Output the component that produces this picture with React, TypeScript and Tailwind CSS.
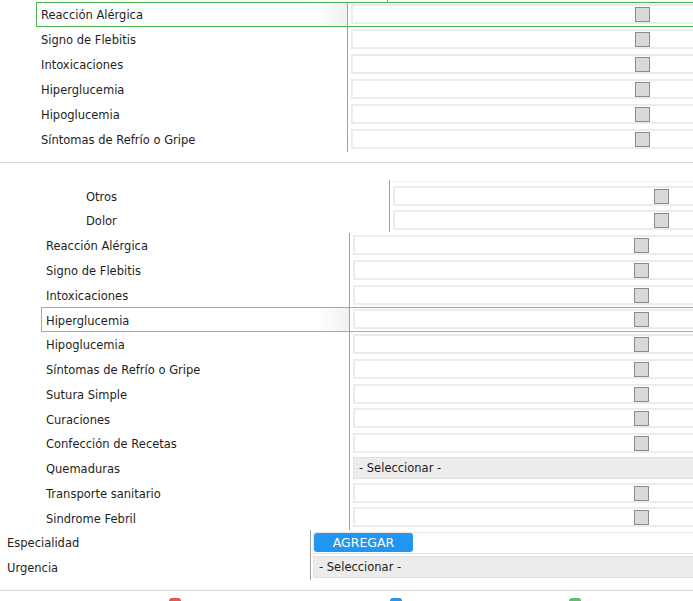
import React from 'react';

const firstGroup = [
  'Reacción Alérgica',
  'Signo de Flebitis',
  'Intoxicaciones',
  'Hiperglucemia',
  'Hipoglucemia',
  'Síntomas de Refrío o Gripe',
];

const otros = ['Otros', 'Dolor'];

const secondGroup = [
  'Reacción Alérgica',
  'Signo de Flebitis',
  'Intoxicaciones',
  'Hiperglucemia',
  'Hipoglucemia',
  'Síntomas de Refrío o Gripe',
  'Sutura Simple',
  'Curaciones',
  'Confección de Recetas',
  'Quemaduras',
  'Transporte sanitario',
  'Sindrome Febril',
];

// focused row: thin green frame, label cell fades to grey on the right
const hlTop =
  'shadow-[inset_0_1px_0_#4cb84c,inset_0_-1px_0_#4cb84c,inset_1px_0_0_#4cb84c]';
const hlSoft =
  'shadow-[inset_0_1px_0_#7ec87e,inset_0_-1px_0_#7ec87e,inset_1px_0_0_#7ec87e]';
const hlLabel = 'bg-[linear-gradient(to_right,#ffffff_90%,#f0f0f0)] my-[1px] ml-[1px]';

function CheckBox() {
  return <div className="w-[15px] h-[15px] mt-[1px] bg-[#d9d9d9] border border-[#8a8a8a] shrink-0" />;
}

function InputBox({ offset }: { offset: string }) {
  return (
    <div className="w-[420px] h-[20px] border-2 border-[#ececec] bg-white flex items-start">
      <div className={offset}>
        <CheckBox />
      </div>
    </div>
  );
}

function SelectBox({ width }: { width: string }) {
  return (
    <div
      className={`${width} h-[22px] bg-[#ececec] border border-[#e2e2e2] flex items-center pl-[5px] pt-[1px] text-[11.5px] text-[#222]`}
    >
      - Seleccionar -
    </div>
  );
}

export default function App() {
  return (
    <div className="w-[693px] h-[601px] overflow-hidden bg-white font-['DejaVu_Sans',sans-serif] text-[11.5px] text-[#1e1e1e]">
      {/* sliver of the block above */}
      <div className="h-[2px] ml-[387px] border-l border-[#a0a0a0]" />

      {/* first group */}
      <div className="flex flex-col">
        {firstGroup.map((label, i) => (
          <div key={label} className={`flex h-[25px] ml-[36px] ${i === 0 ? hlTop : ''}`}>
            <div
              className={`pt-[2px] flex items-center whitespace-nowrap ${i === 0 ? hlLabel + ' w-[310px] pl-[4px]' : 'w-[311px] pl-[5px]'}`}
            >
              {label}
            </div>
            <div className="flex-1 border-l border-[#a0a0a0] pl-[3px] pt-[2px] overflow-hidden">
              <InputBox offset="ml-[282px]" />
            </div>
          </div>
        ))}
      </div>

      <div className="mt-[10px] border-t border-[#d6d6d6]" />

      {/* otros / dolor */}
      <div className="mt-[17px] flex h-[53px]">
        <div className="w-[389px] pt-[6px] flex flex-col">
          {otros.map((label) => (
            <div key={label} className="h-[24px] pl-[86px] flex items-center">
              {label}
            </div>
          ))}
        </div>
        <div className="flex-1 h-[52px] border-l border-[#a0a0a0] pl-[3px] overflow-hidden">
          <div className="mt-[1px] h-[1px] bg-[#efefef]" />
          <div className="flex flex-col pt-[2px]">
            {otros.map((label) => (
              <div key={label} className="h-[24px] pt-[2px]">
                <InputBox offset="ml-[259px]" />
              </div>
            ))}
          </div>
        </div>
      </div>

      {/* second group */}
      <div className="flex flex-col">
        {secondGroup.map((label, i) => (
          <div key={label + i} className={`flex h-[24.75px] ml-[41px] ${i === 3 ? hlSoft : ''}`}>
            <div
              className={`pt-[3px] flex items-center whitespace-nowrap ${i === 3 ? hlLabel + ' w-[307px] pl-[4px]' : 'w-[308px] pl-[5px]'}`}
            >
              {label}
            </div>
            <div className="flex-1 border-l border-[#a0a0a0] pl-[3px] pt-[2px] overflow-hidden">
              {label === 'Quemaduras' ? (
                <div className="-mt-[1px]">
                  <SelectBox width="w-[420px]" />
                </div>
              ) : (
                <InputBox offset="ml-[279px]" />
              )}
            </div>
          </div>
        ))}
      </div>

      {/* especialidad / urgencia */}
      <div className="flex flex-col">
        <div className="flex h-[25px]">
          <div className="w-[310px] pl-[7px] pt-[2px] flex items-center">Especialidad</div>
          <div className="flex-1 border-l border-[#a0a0a0] pl-[2px] pt-[2px] overflow-hidden">
            <div className="w-[420px] h-[22px] border border-[#e6e6e6] bg-white">
              <button className="w-[99px] h-[19px] bg-[#2196f3] rounded-[3px] text-white text-[12.5px] leading-none pt-[1px] font-['DejaVu_Sans',sans-serif]">
                AGREGAR
              </button>
            </div>
          </div>
        </div>
        <div className="flex h-[25px]">
          <div className="w-[310px] pl-[7px] pt-[2px] flex items-center">Urgencia</div>
          <div className="flex-1 border-l border-[#a0a0a0] pl-[2px] pt-[1px] overflow-hidden">
            <SelectBox width="w-[420px]" />
          </div>
        </div>
      </div>

      <div className="mt-[10px] border-t border-[#d6d6d6]" />

      {/* action icons, cut off at the bottom */}
      <div className="flex mt-[7px]">
        <div className="ml-[169px] w-[12px] h-[12px] rounded-[3px] bg-[#ef5350]" />
        <div className="ml-[209px] w-[12px] h-[12px] rounded-[3px] bg-[#2196f3]" />
        <div className="ml-[167px] w-[12px] h-[12px] rounded-[3px] bg-[#66bb6a]" />
      </div>
    </div>
  );
}
